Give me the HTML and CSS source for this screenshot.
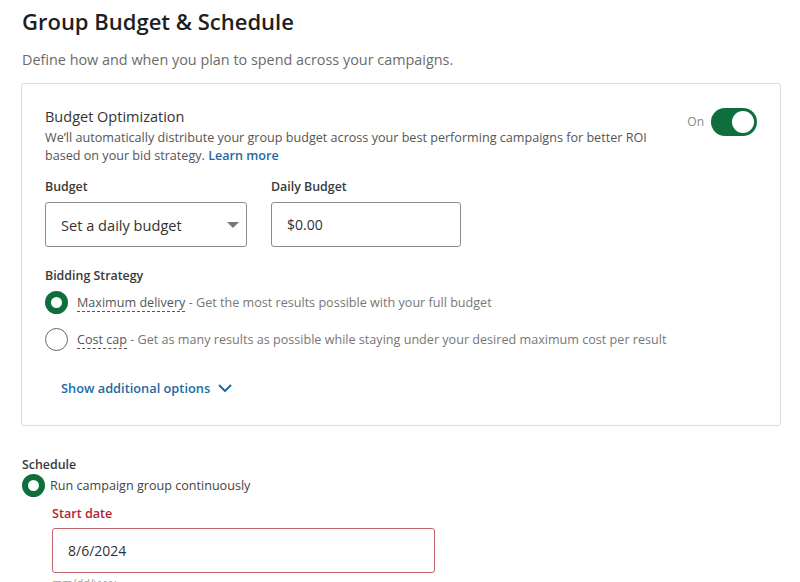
FILE: index.html
```html
<!DOCTYPE html>
<html lang="en">
<head>
    <meta charset="UTF-8">
    <meta name="viewport" content="width=device-width, initial-scale=1.0">
    <title>Group Budget &amp; Schedule</title>
    <link rel="stylesheet" href="styles.css">
</head>
<body>
    <main class="page">
        <h1 class="page-title">Group Budget &amp; Schedule</h1>
        <p class="page-subtitle">Define how and when you plan to spend across your campaigns.</p>

        <section class="card">
            <div class="optimization">
                <div class="optimization-text">
                    <h2 class="section-title">Budget Optimization</h2>
                    <p class="section-desc">We’ll automatically distribute your group budget across your best performing campaigns for better ROI<br>based on your bid strategy. <a href="#" class="link">Learn more</a></p>
                </div>
                <div class="toggle-wrap">
                    <span class="toggle-label">On</span>
                    <span class="toggle"><span class="toggle-knob"></span></span>
                </div>
            </div>

            <div class="budget-row">
                <div class="field">
                    <label class="field-label">Budget</label>
                    <div class="select">
                        <span>Set a daily budget</span>
                        <span class="caret"></span>
                    </div>
                </div>
                <div class="field">
                    <label class="field-label">Daily Budget</label>
                    <div class="input input-daily">$0.00</div>
                </div>
            </div>

            <div class="bidding">
                <div class="field-label">Bidding Strategy</div>
                <div class="radio-row">
                    <span class="radio checked"></span>
                    <span class="radio-text"><span class="dotted">Maximum delivery</span> - Get the most results possible with your full budget</span>
                </div>
                <div class="radio-row">
                    <span class="radio"></span>
                    <span class="radio-text"><span class="dotted">Cost cap</span> - Get as many results as possible while staying under your desired maximum cost per result</span>
                </div>
            </div>

            <a href="#" class="more-link">Show additional options
                <svg width="14" height="9" viewBox="0 0 14 9"><path d="M1.5 1.5 L7 7 L12.5 1.5" fill="none" stroke="currentColor" stroke-width="2" stroke-linecap="round" stroke-linejoin="round"/></svg>
            </a>
        </section>

        <section class="schedule">
            <div class="field-label">Schedule</div>
            <div class="schedule-radio">
                <span class="radio checked"></span>
                <span class="schedule-text">Run campaign group continuously</span>
            </div>
            <div class="start-date">
                <div class="error-label">Start date</div>
                <div class="input input-error">8/6/2024</div>
                <div class="hint">mm/dd/yyyy</div>
            </div>
        </section>
    </main>
</body>
</html>
```

FILE: styles.css
```css
:root {
    --text-dark: #1f1f1f;
    --text-body: #3b3b3b;
    --text-muted: #6b6b6b;
    --border: #dcdcdc;
    --green: #0f6f3c;
    --blue: #1d6aa3;
    --red: #b3242f;
}

* {
    box-sizing: border-box;
}

body {
    margin: 0;
    font-family: "Open Sans", "Noto Sans", sans-serif;
    color: var(--text-body);
    background: #ffffff;
}

.page {
    padding: 5px 19px 0 21px;
}

.page-title {
    margin: 0 0 0 1px;
    font-size: 22px;
    font-weight: 600;
    color: var(--text-dark);
    line-height: 32px;
}

.page-subtitle {
    margin: 13px 0 0 1px;
    font-size: 14.4px;
    color: var(--text-muted);
    line-height: 20px;
}

.card {
    margin-top: 13px;
    border: 1px solid var(--border);
    border-radius: 3px;
    padding: 23px 23px 27px 23px;
}

.optimization {
    display: flex;
    justify-content: space-between;
    align-items: flex-start;
}

.section-title {
    margin: 0;
    font-size: 14.5px;
    font-weight: 400;
    color: #333;
    line-height: 20px;
}

.section-desc {
    margin: 2px 0 0 0;
    font-size: 12.6px;
    line-height: 18px;
    color: #555;
}

.link {
    color: var(--blue);
    font-weight: 600;
    text-decoration: none;
}

.toggle-wrap {
    display: flex;
    align-items: center;
    gap: 7px;
    margin-top: 1px;
}

.toggle-label {
    font-size: 12px;
    color: #888;
    margin-top: -2px;
}

.toggle {
    display: flex;
    align-items: center;
    justify-content: flex-end;
    width: 46px;
    height: 28px;
    padding: 3px;
    border-radius: 14px;
    background: var(--green);
}

.toggle-knob {
    width: 22px;
    height: 22px;
    border-radius: 50%;
    background: #fff;
}

.budget-row {
    display: flex;
    gap: 24px;
    margin-top: 13px;
}

.field {
    display: flex;
    flex-direction: column;
}

.field-label {
    font-size: 12.4px;
    font-weight: 600;
    color: #3a3a3a;
    line-height: 18px;
}

.select,
.input {
    margin-top: 6px;
    height: 45px;
    border: 1px solid #8c8c8c;
    border-radius: 3px;
    display: flex;
    align-items: center;
    padding: 0 15px;
    font-size: 14px;
    color: #333;
}

.select {
    width: 202px;
    justify-content: space-between;
    padding-right: 7px;
    font-size: 14.6px;
}

.caret {
    width: 0;
    height: 0;
    border-left: 6px solid transparent;
    border-right: 6px solid transparent;
    border-top: 6px solid #777;
}

.input-daily {
    width: 190px;
}

.bidding {
    margin-top: 20px;
}

.radio-row {
    display: flex;
    align-items: center;
    gap: 9px;
    margin-top: 6px;
}

.radio-row + .radio-row {
    margin-top: 14px;
}

.radio {
    flex: none;
    width: 23px;
    height: 23px;
    border-radius: 50%;
    border: 1px solid #666;
    background: #fff;
}

.radio.checked {
    border: 6px solid var(--green);
}

.radio-text {
    font-size: 12.6px;
    color: #777;
    line-height: 18px;
}

.dotted {
    color: #555;
    border-bottom: 1px dashed #555;
}

.more-link {
    display: inline-flex;
    align-items: center;
    gap: 8px;
    margin: 28px 0 0 16px;
    font-size: 12.8px;
    font-weight: 600;
    color: var(--blue);
    text-decoration: none;
}

.schedule {
    margin-top: 30px;
    margin-left: 1px;
}

.schedule-radio {
    display: flex;
    align-items: center;
    gap: 5px;
}

.schedule-text {
    font-size: 12.6px;
    color: #444;
}

.start-date {
    margin: 8px 0 0 30px;
}

.error-label {
    font-size: 12.6px;
    font-weight: 600;
    color: var(--red);
    line-height: 18px;
}

.input-error {
    width: 383px;
    border-color: #c2646b;
    margin-top: 5px;
}

.hint {
    font-size: 11px;
    color: #999;
    margin-top: 2px;
}
```
